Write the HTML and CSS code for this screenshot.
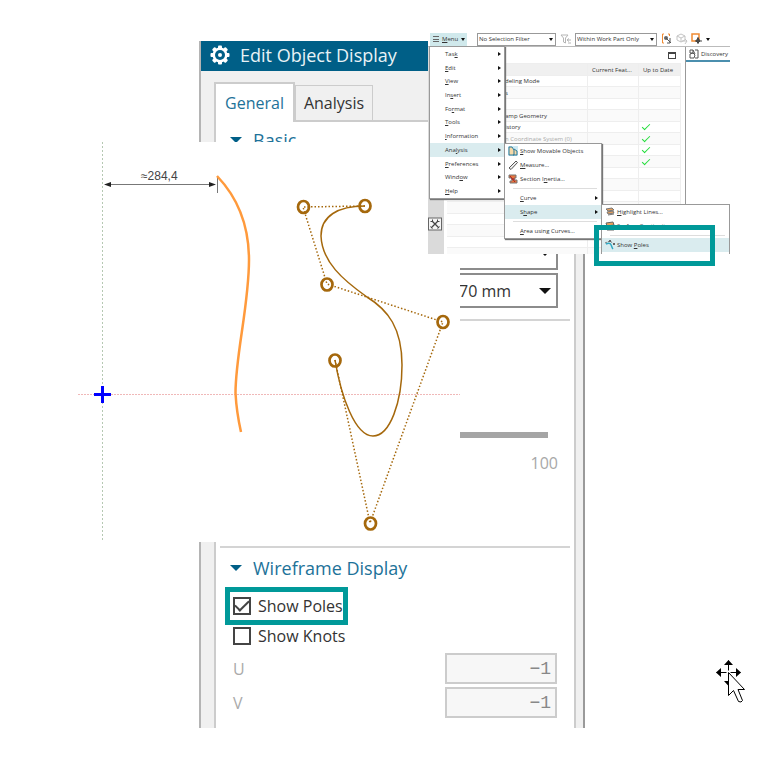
FILE: index.html
```html
<!DOCTYPE html>
<html lang="en">
<head>
<meta charset="utf-8">
<title>Edit Object Display</title>
<link rel="stylesheet" href="styles.css">
</head>
<body>
<main class="canvas">

<section class="dialog">
  <header class="dialog-title">
    <svg class="gear" viewBox="0 0 20 20"><g fill="#fff"><circle cx="10" cy="10" r="7.5"/><g><rect x="8" y="0.5" width="4" height="19" rx="1"/><rect x="0.5" y="8" width="19" height="4" rx="1"/></g><g transform="rotate(45 10 10)"><rect x="8" y="0.5" width="4" height="19" rx="1"/><rect x="0.5" y="8" width="19" height="4" rx="1"/></g></g><circle cx="10" cy="10" r="5" fill="#005f87"/><circle cx="10" cy="10" r="2" fill="#fff"/></svg>
    <h1>Edit Object Display</h1>
  </header>
  <div class="dialog-body">
    <nav class="tabs"><button class="tab active">General</button><button class="tab">Analysis</button></nav>
    <div class="panel">
      <section class="group basic">
        <h2><i class="caret"></i>Basic</h2>
        <div class="fields">
          <div class="combo"><select aria-label="Line font"><option></option></select><i class="stroke"></i><i class="down"></i></div>
          <div class="combo"><select aria-label="Width"><option>70 mm</option></select><i class="down"></i></div>
        </div>
      </section>
      <section class="group slider">
        <input type="range" min="0" max="100" value="0" aria-label="Translucency">
        <span>100</span>
      </section>
      <section class="group wire">
        <h2><i class="caret"></i>Wireframe Display</h2>
        <label class="check marked"><input type="checkbox" checked>Show Poles</label>
        <label class="check"><input type="checkbox">Show Knots</label>
        <div class="number"><label for="u">U</label><input id="u" value="−1" disabled></div>
        <div class="number"><label for="v">V</label><input id="v" value="−1" disabled></div>
      </section>
    </div>
  </div>
</section>

<svg class="sketch" viewBox="78 142 382 400">
  <path d="M102.5 142V541" stroke="#b5c8b2" stroke-dasharray="2 2"/>
  <path d="M78 394.5H460" stroke="#f0b8b8" stroke-dasharray="2 1"/>
  <path d="M94 394.5H111M102.500 386V403" stroke="#00f" stroke-width="3"/>
  <path d="M106 184.500H214" stroke="#777"/>
  <path d="M217.500 177V193" stroke="#777"/>
  <path d="M104 184.500l7-2.500v5zM216 184.500l-7-2.500v5z" fill="#222"/>
  <text x="141" y="180">≈284,4</text>
  <path d="M217 176C238 198 249 225 249 260C249 305 235.500 355 235.500 393Q236.500 412 241 432" fill="none" stroke="#ff9a3c" stroke-width="2.500"/>
  <path d="M365 206L303 207L327 284L443 322L370 523L335 360" fill="none" stroke="#a5680c" stroke-width="1.500" stroke-dasharray="1.500 2"/>
  <path d="M365 206C338 206 321 216 321 236C322 262 343 280 367 297C388 310 402 328 402 365C402 402 390 436 373 436C355 436 341 396 335 360" fill="none" stroke="#a5680c" stroke-width="1.500"/>
  <g fill="none" stroke="#a5680c" stroke-width="2.700"><ellipse cx="365" cy="206" rx="5.500" ry="6"/><ellipse cx="303.500" cy="207" rx="5.500" ry="6"/><ellipse cx="327" cy="284.500" rx="5.500" ry="6"/><ellipse cx="443" cy="322" rx="5.500" ry="6"/><ellipse cx="335" cy="360.500" rx="5.500" ry="6"/><ellipse cx="370.500" cy="523.500" rx="5.500" ry="6"/></g>
</svg>

<section class="app">
  <div class="toolbar">
    <button class="menu-btn"><i class="bars"></i><span><u>M</u>enu</span><i class="down"></i></button>
    <div class="pick first"><select aria-label="Selection filter"><option>No Selection Filter</option></select><i class="down"></i></div>
    <svg class="tool" viewBox="0 0 12 12"><path d="M1 2h7L5.500 5v5L3.500 9V5zM7 7h4M9 5.500L7 7l2 1.500M8 10h3" fill="none" stroke="#b5b5b5"/></svg>
    <div class="pick second"><select aria-label="Selection scope"><option>Within Work Part Only</option></select><i class="down"></i></div>
    <svg class="tool" viewBox="0 0 12 12"><path d="M3 1H1.500V10H3M7 1h1.500v2" fill="none" stroke="#f08a32"/><circle cx="5" cy="5" r="2" fill="#666"/><path d="M5 5l5 5M9 5v5H6" stroke="#555" fill="none"/></svg>
    <svg class="tool" viewBox="0 0 12 12"><path d="M1 3l4-2 4 2v4L5 9 1 7zM1 3l4 2 4-2M5 5v4M6 8h5M9 6l2 2-2 3" fill="none" stroke="#c4c4c4"/></svg>
    <svg class="tool" viewBox="0 0 12 12"><rect x="1" y="1" width="7" height="7" fill="none" stroke="#f08a32" stroke-width="1.500"/><path d="M7 4v7M4 8h7M7 5l2 3-2 2-2-2z" stroke="#444" fill="#555"/></svg>
    <i class="down"></i>
  </div>
  <div class="work">
    <aside class="rail"><svg viewBox="0 0 14 14"><rect x=".5" y="1" width="13" height="12" fill="#f4f4f4" stroke="#666"/><path d="M4 4l7 7M10 4l-7 7" stroke="#444" stroke-width="1.300"/><path d="M2.500 4.500h2v-2M9.500 2.500v2h2M2.500 9.500l2 2M9.500 11.500l2-2" fill="none" stroke="#444"/></svg></aside>
    <div class="navigator">
      <div class="nav-head"><i class="maximize"></i></div>
      <table>
        <thead><tr><th></th><th>Current Feat...</th><th>Up to Date</th></tr></thead>
        <tbody>
          <tr><td>deling Mode</td><td></td><td></td></tr>
          <tr><td>s</td><td></td><td></td></tr>
          <tr><td></td><td></td><td></td></tr>
          <tr><td>amp Geometry</td><td></td><td></td></tr>
          <tr><td>istory</td><td></td><td><i class="tick"></i></td></tr>
          <tr><td class="dim">n Coordinate System (0)</td><td></td><td><i class="tick"></i></td></tr>
          <tr><td></td><td></td><td><i class="tick"></i></td></tr>
          <tr><td></td><td></td><td><i class="tick"></i></td></tr>
          <tr><td></td><td></td><td></td></tr><tr><td></td><td></td><td></td></tr>
          <tr><td></td><td></td><td></td></tr><tr><td></td><td></td><td></td></tr>
          <tr><td></td><td></td><td></td></tr><tr><td></td><td></td><td></td></tr>
          <tr><td></td><td></td><td></td></tr><tr><td></td><td></td><td></td></tr>
        </tbody>
      </table>
    </div>
    <div class="view"><div class="view-tab"><svg viewBox="0 0 10 10"><path d="M1 1h3v3H1zM6 1h3v8H6M1 5l3-1 2 2-1 3H1zM4 1l2 4" fill="none" stroke="#555"/></svg>Discovery</div></div>
  </div>

  <div class="menu main-menu">
    <button>Tas<u>k</u><i></i></button><button><u>E</u>dit<i></i></button><button><u>V</u>iew<i></i></button><button>In<u>s</u>ert<i></i></button><button>Fo<u>r</u>mat<i></i></button><button><u>T</u>ools<i></i></button><button><u>I</u>nformation<i></i></button><button class="on">Ana<u>l</u>ysis<i></i></button><button><u>P</u>references<i></i></button><button>Wind<u>o</u>w<i></i></button><button><u>H</u>elp<i></i></button>
  </div>
  <div class="menu analysis-menu">
    <button><svg viewBox="0 0 10 10"><rect width="10" height="10" fill="#cde9f2"/><path d="M1 1h3l2 3v5H1zM6 3l3 2v4H5" fill="#f6d9a8" stroke="#28799a"/></svg><u>S</u>how Movable Objects</button>
    <button><svg viewBox="0 0 10 10"><path d="M1 8L8 1l1.500 1.500L3 9.500z" fill="#eee" stroke="#555"/></svg><u>M</u>easure...</button>
    <button><svg viewBox="0 0 10 10"><path d="M1 1h7v3H6v2h3v3H2V7h2V4H1z" fill="#e8743b" stroke="#777"/><path d="M3 5h4M2 2l5 6" stroke="#a22"/></svg>Section I<u>n</u>ertia...</button>
    <hr>
    <button><u>C</u>urve<i></i></button>
    <button class="on">S<u>h</u>ape<i></i></button>
    <hr>
    <button><u>A</u>rea using Curves...</button>
  </div>
  <div class="menu shape-menu">
    <button><svg viewBox="0 0 10 10"><path d="M1 2l6-1 2 2-6 1zM2 5l6-1 1 2-6 1zM3 8l6-1" fill="#e9a15c" stroke="#777"/></svg><u>H</u>ighlight Lines...</button>
    <button><svg viewBox="0 0 10 10"><path d="M1 2l7-1 1 3-7 1zM2 5h7v4H2z" fill="#e9a15c" stroke="#666"/></svg>Surface Continuity...</button>
    <hr>
    <button class="on"><svg viewBox="0 0 10 10"><path d="M0 3l5-2 4 3" fill="none" stroke="#777" stroke-dasharray="2 1"/><path d="M1 4c6-3 5 3 7 5" fill="none" stroke="#31a9c4" stroke-width="1.500"/><path d="M4 0h2v2H4zM8 3h2v2H8z" fill="#666"/></svg>Show <u>P</u>oles</button>
  </div>
</section>

<div class="frame"></div>

<svg class="cursor" viewBox="0 0 32 46">
  <path d="M13 1v10M1 13h10M15 13h10M13 15v10" stroke="#000" stroke-width="1" transform="translate(.5 .5)"/>
  <path d="M13.500 1L18 6H9zM1 13.500L6 9v9zM26 13.500L21 9v9zM13.500 27L9 22h9z"/>
  <path d="M13.500 13.500V36.500L18.500 31.500L23.500 42.500Q26.500 44 27.500 41.500L23 30.500H29.500Z" fill="#fff" stroke="#000"/>
</svg>
</main>
</body>
</html>
```
FILE: styles.css
```css
* { box-sizing: border-box; }
body { margin: 0; background: #fff; font-family: "Open Sans", "Noto Sans", sans-serif; color: #333; }
button, input, select { font: inherit; color: inherit; }
button { border: 0; background: none; padding: 0; text-align: left; }
h1, h2 { margin: 0; font-weight: 400; }
i { display: block; flex: none; }
svg { display: block; flex: none; }
.canvas { position: relative; min-height: 100vh; overflow: hidden; }

/* Floating windows */
.dialog { position: absolute; left: 199px; top: 41px; width: 386px; background: #f0f0f0; border-left: 2px solid #b4b4b4; border-right: 2px solid #9a9a9a; }
.sketch { position: absolute; left: 78px; top: 142px; width: 382px; height: 400px; background: #fff; }
.sketch text { font: 12px "Liberation Sans", sans-serif; fill: #444; }
.app { position: absolute; left: 428px; top: 32px; width: 302px; height: 222px; overflow: hidden; background: #fff; font-size: 6px; line-height: 10px; }

/* Dialog */
.dialog-title { display: flex; align-items: center; gap: 10px; height: 30px; padding: 0 0 2px 9px; background: #005f87; color: #e8f2f6; }
.dialog-title h1 { font-size: 18px; line-height: 24px; }
.gear { width: 20px; height: 20px; }
.dialog-body { padding: 11px 7px 0 13px; }
.tabs { display: flex; align-items: flex-end; height: 38px; }
.tab { height: 35px; padding: 0; border: 1px solid #ccc; border-bottom: 0; font-size: 16px; text-align: center; flex: 0 0 78px; }
.tab.active { position: relative; height: 40px; flex-basis: 81px; margin-bottom: -2px; border: 2px solid #ccc; border-bottom: 0; background: #fff; color: #1d7299; }
.panel { background: #fff; border: 2px solid #ccc; border-bottom: 0; }
.group { margin: 0 4px; border-bottom: 2px solid #d4d4d4; }
.group h2 { display: flex; align-items: center; gap: 11px; height: 40px; padding-left: 10px; font-size: 18px; color: #1d7299; }
.caret { border: 6px solid transparent; border-top-color: #005f87; border-bottom: 0; }
.down { border: 3px solid transparent; border-top-color: #111; border-bottom: 0; }
.basic { height: 199px; display: flex; flex-direction: column; justify-content: space-between; }
.basic h2 { height: 36px; }
.fields { display: grid; gap: 3px; padding: 0 13px 11px 223px; }
.combo { display: flex; align-items: center; height: 35px; border: 2px solid #8c8c8c; padding-right: 5px; }
.combo select { appearance: none; border: 0; background: none; flex: 1; min-width: 0; padding: 0 0 0 14px; font-size: 16px; }
.combo .down { border-width: 6px 6px 0; }
.stroke { width: 66px; height: 1px; margin-right: 14px; background: #777; }
.slider { height: 227px; display: flex; flex-direction: column; align-items: flex-end; padding: 111px 22px 0 223px; }
.slider input { appearance: none; width: 100%; height: 6px; margin: 0; background: #a5a5a5; }
.slider input::-webkit-slider-thumb { appearance: none; width: 6px; height: 6px; background: #a5a5a5; }
.slider span { margin: 13px -10px 0 0; font-size: 16px; line-height: 24px; color: #a8a8a8; }
.wire { border: 0; padding-bottom: 10px; }
.check { display: flex; align-items: center; gap: 7px; width: fit-content; height: 28px; margin: 0 0 2px 10px; padding: 0 0 0 3px; font-size: 16px; }
.marked { box-shadow: 0 0 0 5px #009999; margin-top: 4px; }
.check input { appearance: none; width: 18px; height: 18px; margin: 0; border: 2px solid #444; background: #fff; display: grid; place-items: center; }
.check input:checked::before { content: ""; width: 12px; height: 6px; margin-top: -4px; border-left: 2px solid #444; border-bottom: 2px solid #444; transform: rotate(-45deg); }
.number { display: flex; align-items: center; justify-content: space-between; padding: 0 13px 0 13px; margin-top: 3px; font-size: 16px; color: #aaa; }
.number input { width: 112px; height: 31px; border: 2px solid #ccc; background: #f7f7f7; color: #888; text-align: right; padding: 0 4px; font: 18px "Liberation Mono", monospace; }

/* Application window */
.toolbar { display: flex; align-items: center; height: 14px; padding-left: 2px; }
.menu-btn { display: flex; align-items: center; gap: 3px; width: 37px; height: 13px; padding-left: 3px; background: #d0e9ec; font-size: 6px; }
.bars { width: 6px; height: 6px; border: solid #666; border-width: 1px 0; background: linear-gradient(#666, #666) center / 100% 1px no-repeat; }
.toolbar .down { border-width: 3px 2px 0; }
.pick { display: flex; align-items: center; height: 13px; border: 1px solid #999; padding-right: 2px; }
.pick select { appearance: none; border: 0; background: none; flex: 1; min-width: 0; padding: 0 0 0 1px; font-size: 6px; line-height: 10px; }
.first { width: 79px; margin-left: 10px; }
.second { width: 82px; }
.tool { width: 12px; height: 12px; margin: 0 3px 0 4px; }
.second + .tool ~ .tool { margin-left: 0; }
.work { display: flex; height: 208px; border-top: 1px solid #bbb; }
.rail { width: 16px; background: #dadada; padding-top: 170px; }
.rail svg { width: 14px; height: 14px; }
.navigator { flex: 1; padding: 0 4px 0 3px; }
.nav-head { display: flex; justify-content: flex-end; padding: 5px 5px 0 0; height: 16px; }
.maximize { width: 8px; height: 7px; border: 1px solid #444; border-top-width: 2px; }
table { width: 100%; table-layout: fixed; border-collapse: collapse; }
th, td { padding: 0; border: 1px solid #eee; border-left: 0; font-size: 6px; line-height: 8px; font-weight: 400; white-space: nowrap; text-align: left; }
th { background: #f0f0f0; padding-left: 4px; height: 12px; }
th:nth-child(2) { width: 51px; }
th:nth-child(3) { width: 42px; }
td:first-child { padding-left: 58px; }
tbody tr { height: 11px; }
tbody tr:nth-child(even) { height: 12px; background: #fafafa; }
.dim { color: #aaa; }
.tick { width: 8px; height: 4px; margin: -2px 0 0 3px; border: solid #22dd3a; border-width: 0 0 1px 1px; transform: rotate(-45deg); }
.view { width: 45px; border-left: 1px solid #999; }
.view-tab { display: flex; align-items: center; gap: 2px; height: 15px; padding-left: 3px; border-bottom: 2px solid #4b8fae; }
.view-tab svg { width: 10px; height: 10px; }

/* Menus over the application window */
.menu { position: absolute; display: grid; background: #fff; border: 1px solid #999; box-shadow: 1px 1px 1px #777; }
.menu button { display: flex; align-items: center; white-space: pre; position: relative; padding-left: 15px; }
.menu button i { margin-left: auto; margin-right: 3px; border: 2px solid transparent; border-left: 3px solid #111; border-right: 0; }
.menu button svg { width: 10px; height: 10px; margin: 0 2px 0 -12px; }
.menu .on { background: #daecef; }
.menu hr { width: auto; margin: 2px 4px 2px 8px; border: 0; height: 1px; background: #ddd; }
.main-menu { left: 1px; top: 14px; width: 76px; height: 153px; grid-auto-rows: 1fr; }
.analysis-menu { left: 76px; top: 111px; width: 98px; }
.shape-menu { left: 173px; top: 172px; width: 129px; height: 60px; align-content: start; }
.analysis-menu button, .shape-menu button { height: 14px; }
.frame { position: absolute; left: 594px; top: 225px; width: 121px; height: 41px; border: 5px solid #009999; }
.cursor { position: absolute; left: 715px; top: 659px; width: 32px; height: 46px; }
```
